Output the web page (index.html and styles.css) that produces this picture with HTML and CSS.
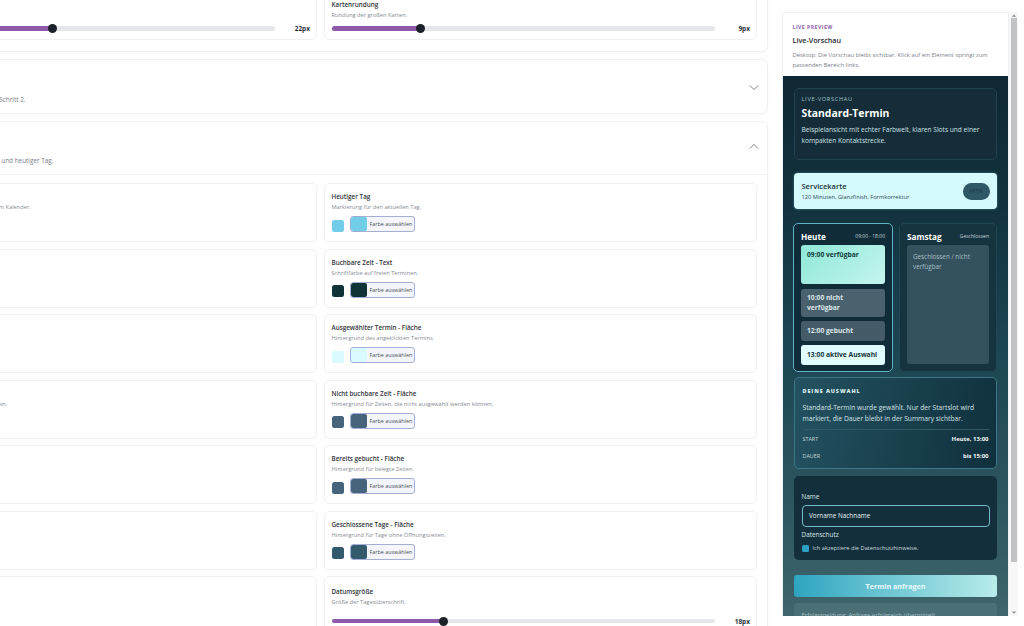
FILE: index.html
```html
<!DOCTYPE html>
<html lang="de">
<head>
<meta charset="utf-8">
<title>Live-Vorschau</title>
<link rel="stylesheet" href="styles.css">
</head>
<body>
<div class="page">
  <main class="editor">
    <section class="panel panel-first">
      <div class="grid">
        <div class="card">
          <h4>Kartenabstand</h4>
          <p>Abstand der Karten.</p>
          <div class="slider"><div class="track"><div class="fill fill-a"></div><span class="thumb"></span></div><b>22px</b></div>
        </div>
        <div class="card">
          <h4>Kartenrundung</h4>
          <p>Rundung der großen Karten.</p>
          <div class="slider"><div class="track"><div class="fill fill-b"></div><span class="thumb"></span></div><b>9px</b></div>
        </div>
      </div>
    </section>
    <section class="panel">
      <header class="panel-head">
        <div><h3>Abstände</h3><p class="clip-a">Felder, Buttons und Hinweise im Ablauf ab Schritt 2.</p></div>
        <svg class="chev" viewBox="0 0 12 8"><path d="M1 1.5 6 6.5 11 1.5"/></svg>
      </header>
    </section>
    <section class="panel">
      <header class="panel-head panel-head-open">
        <div><h3>Kalender</h3><p class="clip-b">Farben für Tage, Slots, Zeiten und heutiger Tag.</p></div>
        <svg class="chev" viewBox="0 0 12 8"><path d="M1 6.5 6 1.5 11 6.5"/></svg>
      </header>
      <div class="grid grid-open">
        <div class="card"><h4>Kalender</h4><p class="clip-c">Grundfarbe für die Fläche der Tage in dem Kalender.</p></div>
        <div class="card"><h4>Heutiger Tag</h4><p>Markierung für den aktuellen Tag.</p><div class="colour"><span class="dot c-today"></span><span class="pick"><i class="c-today"></i><em>Farbe auswählen</em></span></div></div>
        <div class="card"></div>
        <div class="card"><h4>Buchbare Zeit - Text</h4><p>Schriftfarbe auf freien Terminen.</p><div class="colour"><span class="dot c-text"></span><span class="pick"><i class="c-text"></i><em>Farbe auswählen</em></span></div></div>
        <div class="card"></div>
        <div class="card"><h4>Ausgewählter Termin - Fläche</h4><p>Hintergrund des angeklickten Termins.</p><div class="colour"><span class="dot c-sel"></span><span class="pick"><i class="c-sel"></i><em>Farbe auswählen</em></span></div></div>
        <div class="card"><h4>Zeit</h4><p class="clip-d">Textfarbe für Zeiten, die nicht buchbar sein.</p></div>
        <div class="card"><h4>Nicht buchbare Zeit - Fläche</h4><p>Hintergrund für Zeiten, die nicht ausgewählt werden können.</p><div class="colour"><span class="dot c-off"></span><span class="pick"><i class="c-off"></i><em>Farbe auswählen</em></span></div></div>
        <div class="card"></div>
        <div class="card"><h4>Bereits gebucht - Fläche</h4><p>Hintergrund für belegte Zeiten.</p><div class="colour"><span class="dot c-off"></span><span class="pick"><i class="c-off"></i><em>Farbe auswählen</em></span></div></div>
        <div class="card"></div>
        <div class="card"><h4>Geschlossene Tage - Fläche</h4><p>Hintergrund für Tage ohne Öffnungszeiten.</p><div class="colour"><span class="dot c-closed"></span><span class="pick"><i class="c-closed"></i><em>Farbe auswählen</em></span></div></div>
        <div class="card"></div>
        <div class="card card-tall"><h4>Datumsgröße</h4><p>Größe der Tagesüberschrift.</p><div class="slider"><div class="track"><div class="fill fill-c"></div><span class="thumb"></span></div><b>18px</b></div></div>
      </div>
    </section>
  </main>

  <aside class="preview">
    <div class="preview-inner">
      <header class="preview-head">
        <span class="eyebrow">LIVE PREVIEW</span>
        <h2>Live-Vorschau</h2>
        <p>Desktop: Die Vorschau bleibt sichtbar. Klick auf ein Element springt zum passenden Bereich links.</p>
      </header>
      <div class="stage">
        <div class="hero">
          <span class="hero-eyebrow">LIVE-VORSCHAU</span>
          <h1>Standard-Termin</h1>
          <p>Beispielansicht mit echter Farbwelt, klaren Slots und einer kompakten Kontaktstrecke.</p>
        </div>
        <div class="service">
          <div><h5>Servicekarte</h5><p>120 Minuten, Glanzfinish, Formkorrektur</p></div>
          <span class="badge">AKTIV</span>
        </div>
        <div class="days">
          <div class="day day-today">
            <div class="day-head"><strong>Heute</strong><span>09:00 - 18:00</span></div>
            <div class="slot slot-free">09:00 verfügbar</div>
            <div class="slot slot-off">10:00 nicht verfügbar</div>
            <div class="slot slot-booked">12:00 gebucht</div>
            <div class="slot slot-active">13:00 aktive Auswahl</div>
          </div>
          <div class="day">
            <div class="day-head"><strong>Samstag</strong><span>Geschlossen</span></div>
            <div class="closed">Geschlossen / nicht verfügbar</div>
          </div>
        </div>
        <div class="summary">
          <h6>DEINE AUSWAHL</h6>
          <p>Standard-Termin wurde gewählt. Nur der Startslot wird markiert, die Dauer bleibt in der Summary sichtbar.</p>
          <div class="row row-first"><span>START</span><b>Heute, 13:00</b></div>
          <div class="row"><span>DAUER</span><b>bis 15:00</b></div>
        </div>
        <div class="form">
          <label>Name</label>
          <div class="input">Vorname Nachname</div>
          <label>Datenschutz</label>
          <div class="check"><span class="box"></span>Ich akzeptiere die Datenschutzhinweise.</div>
        </div>
        <div class="submit">Termin anfragen</div>
        <div class="success">Erfolgsmeldung: Anfrage erfolgreich übermittelt</div>
      </div>
    </div>
    <div class="scrollbar">
      <svg class="arrow" viewBox="0 0 8 5"><path d="M1 4 4 1 7 4z"/></svg>
      <div class="scroll-thumb"></div>
      <svg class="arrow" viewBox="0 0 8 5"><path d="M1 1 4 4 7 1z"/></svg>
    </div>
  </aside>
</div>
</body>
</html>
```

FILE: styles.css
```css
* { box-sizing: border-box; }
html, body { margin: 0; height: 626px; overflow: hidden; background: #fff; }
body { font-family: "Open Sans", "Noto Sans", sans-serif; color: #2b3038; }
h1, h2, h3, h4, h5, h6, p { margin: 0; }

.page { display: flex; align-items: flex-start; width: 1024px; height: 626px; overflow: hidden; }

/* left editor: scrolled, so it starts above and left of the window */
.editor { flex: 0 0 895px; width: 895px; margin: -20px 0 0 -127px; display: flex; flex-direction: column; gap: 7px; }
.panel { border: 1px solid #eef0f2; border-radius: 6px; background: #fff; box-shadow: 0 1px 2px rgba(20, 30, 40, .03); }
.panel-first { padding: 9px 10px 11px; }
.panel-head { height: 53px; padding: 0 8px 0 10px; display: flex; justify-content: space-between; align-items: flex-end; }
.panel-head > div { padding-bottom: 9px; }
.panel-head-open { height: 53px; border-bottom: 1px solid #f3f4f6; }
.panel-head h3 { display: none; }
.panel-head p { font-size: 6.4px; line-height: 9px; color: #7b818a; white-space: nowrap; }
.clip-a { margin-left: -13px; }
.clip-b { margin-left: 29px; }
.chev { width: 10px; height: 7px; margin: 0 0 22px; }
.panel-head-open .chev { margin-bottom: 24px; }
.chev path { fill: none; stroke: #6f747b; stroke-width: 1.1; }

.grid { display: grid; grid-template-columns: 1fr 1fr; column-gap: 7px; row-gap: 6.5px; }
.grid-open { padding: 8px 10px 10px; }
.card { min-height: 59px; padding: 8px 6px 0 6.5px; border: 1px solid #f0f1f3; border-radius: 5px; background: #fff; }
.panel-first .card { min-height: 50px; padding-top: 8.5px; }
.card-tall { padding-top: 10px; }
.card h4 { font-size: 6.3px; line-height: 9px; font-weight: 600; color: #30343c; white-space: nowrap; }
.card p { margin-top: 2px; font-size: 5.7px; line-height: 9px; color: #878c94; white-space: nowrap; }

.slider { display: flex; align-items: center; margin-top: 4px; height: 10px; }
.card-tall .slider { margin-top: 9px; }
.track { position: relative; flex: 0 0 383px; height: 4.5px; border-radius: 3px; background: #e6e7ea; }
.fill { height: 100%; border-radius: 3px; background: #8c5aa8; }
.fill-a { width: 41.6%; }
.fill-b { width: 23%; }
.fill-c { width: 29%; }
.thumb { position: absolute; top: -2.2px; width: 9px; height: 9px; border-radius: 50%; background: #1d2129; }
.fill-a + .thumb { left: 40.8%; }
.fill-b + .thumb { left: 22%; }
.fill-c + .thumb { left: 28%; }
.slider b { flex: 1; text-align: right; font-size: 6.5px; font-weight: 700; color: #2b3038; }

.colour { display: flex; align-items: center; gap: 6px; margin-top: 4px; }
.dot { width: 12px; height: 12px; border-radius: 2.5px; margin-top: 3px; }
.pick { display: flex; align-items: center; width: 65px; height: 16px; border: 1px solid #a6aed8; border-radius: 3px; background: #f4f6fb; overflow: hidden; }
.pick i { flex: 0 0 16px; height: 100%; border-radius: 2px; }
.pick em { margin-left: 3px; font-style: normal; font-size: 5.4px; color: #4a4f58; white-space: nowrap; }
.c-today { background: #72cde8; }
.c-text { background: #0f3337; }
.c-sel { background: #d9fbff; }
.c-off { background: #46647c; }
.c-closed { background: #335a6c; }

/* preview */
.preview { flex: 0 0 236px; margin: 12px 0 0 14px; display: flex; height: 604px; }
.preview-inner { flex: 0 0 227px; width: 227px; height: 604px; overflow: hidden; border: 1px solid #eef0f2; border-bottom: 0; border-radius: 4px 0 0 0; display: flex; flex-direction: column; }
.preview-head { flex: none; height: 63px; padding: 11px 10px 0 9.5px; background: #fff; }
.eyebrow { display: block; font-size: 5.2px; line-height: 7px; font-weight: 700; letter-spacing: .45px; color: #8d62ad; }
.preview-head h2 { margin-top: 4px; font-size: 7.2px; line-height: 10px; font-weight: 600; color: #23272e; }
.preview-head p { margin-top: 5px; font-size: 5.85px; line-height: 10px; color: #7c8189; }
.stage { flex: none; height: 540px; padding: 12px 11px 0; color: #e4f2f4; background: linear-gradient(180deg, #0f2732 0, #12323f 25%, #1c4553 50%, #2c5560 78%, #40656b 100%); display: flex; flex-direction: column; }
.stage > * { flex: none; }

.hero { height: 72px; padding: 7px 6.5px; border: 1px solid #21424e; border-radius: 5px; background: #142d39; }
.hero-eyebrow { display: block; font-size: 5.6px; line-height: 7px; letter-spacing: .7px; color: #a6c4cb; }
.hero h1 { margin-top: 4px; font-size: 10.4px; line-height: 13px; font-weight: 700; color: #fff; }
.hero p { margin-top: 4px; font-size: 6.6px; line-height: 11px; color: #cfe2e6; }

.service { display: flex; justify-content: space-between; align-items: center; height: 36px; margin-top: 13px; padding: 0 7.5px; border-radius: 4px; background: #d6fbfe; color: #173038; box-shadow: 0 0 3px rgba(120, 220, 230, .4); }
.service h5 { font-size: 7.5px; line-height: 11px; font-weight: 600; }
.service p { font-size: 5.7px; line-height: 9px; margin-top: 1px; color: #2d4750; }
.badge { width: 27px; height: 17px; line-height: 17px; text-align: center; border-radius: 9px; background: #2f5867; color: #1c3c48; font-size: 5px; font-weight: 600; }

.days { display: grid; grid-template-columns: 100px 98px; gap: 6px; margin-top: 14px; height: 149px; margin-left: -1px; }
.day { padding: 0 7px; border: 1px solid #1f4653; border-radius: 5px; background: #163440; }
.day-today { border-color: #5fb1c3; background: #112c39; }
.day-head { display: flex; justify-content: space-between; align-items: center; height: 21px; padding-top: 3px; }
.day-head strong { font-size: 8.2px; font-weight: 700; color: #fff; }
.day-head span { font-size: 5px; color: #c3d6da; }
.slot { margin-bottom: 4.5px; padding: 4.5px 6px; border-radius: 3px; font-size: 6.7px; line-height: 9.5px; font-weight: 700; color: #dbe6e8; }
.slot-free { height: 39px; background: linear-gradient(135deg, #8fe8d8, #c5f5ee); color: #0d3a3a; }
.slot-off { height: 28px; padding-right: 20px; background: #4a626e; }
.slot-booked { height: 19.5px; padding-top: 5px; background: #435c68; }
.slot-active { height: 19.5px; padding-top: 5px; background: #e0fcff; color: #15333a; }
.closed { height: 119px; padding: 7px 6px; border-radius: 3px; background: #33525e; font-size: 6.3px; line-height: 9.5px; color: #a8bfc5; }

.summary { height: 92px; margin-top: 5px; padding: 9.5px 7.5px 0; border: 1px solid #3d7684; border-radius: 5px; background: linear-gradient(100deg, #245261, #10303d); }
.summary h6 { font-size: 5.5px; line-height: 7px; font-weight: 800; letter-spacing: .9px; color: #d9eef0; }
.summary p { margin-top: 7px; font-size: 6.7px; line-height: 11px; color: #d3e4e7; }
.row { display: flex; justify-content: space-between; align-items: center; height: 18px; font-size: 5.4px; color: #c5d9dd; }
.row-first { margin-top: 5px; border-top: 1px solid #2f5b69; padding-top: 1px; }
.row b { font-size: 6px; font-weight: 700; color: #f2f8f9; }

.form { height: 84px; margin-top: 7px; padding: 16px 7.5px 0; border-radius: 5px; background: #132f3b; }
.form label { display: block; font-size: 6.4px; line-height: 9px; color: #d9e7ea; }
.input { height: 22px; margin-top: 4px; padding-left: 6.5px; border: 1px solid #72bcc7; border-radius: 4px; font-size: 6.4px; line-height: 20px; color: #e8f3f5; }
.input + label { margin-top: 3px; }
.check { display: flex; align-items: center; gap: 4px; margin-top: 5px; font-size: 5.7px; line-height: 8px; color: #c6dadf; }
.box { width: 7px; height: 7px; border-radius: 1.5px; background: #2d9fc0; }

.submit { height: 22px; margin-top: 15px; text-align: center; font-size: 7.2px; font-weight: 700; line-height: 22px; color: #e9fbfb; border-radius: 3px; background: linear-gradient(90deg, #2ea5c0, #b9ecea); }
.success { height: 30px; margin-top: 6px; padding: 8px 7.5px; font-size: 6px; line-height: 9px; color: #a6c0c3; border-radius: 4px 4px 0 0; background: #4a7076; }

.scrollbar { flex: 0 0 9px; width: 9px; height: 604px; display: flex; flex-direction: column; align-items: center; background: #f7f7f8; }
.arrow { flex: 0 0 5px; width: 6px; margin: 1px 0; }
.arrow path { fill: #8b8e92; }
.scroll-thumb { flex: 0 0 544px; width: 6px; margin-top: -1px; margin-bottom: 47px; background: #c2c3c5; }
```
